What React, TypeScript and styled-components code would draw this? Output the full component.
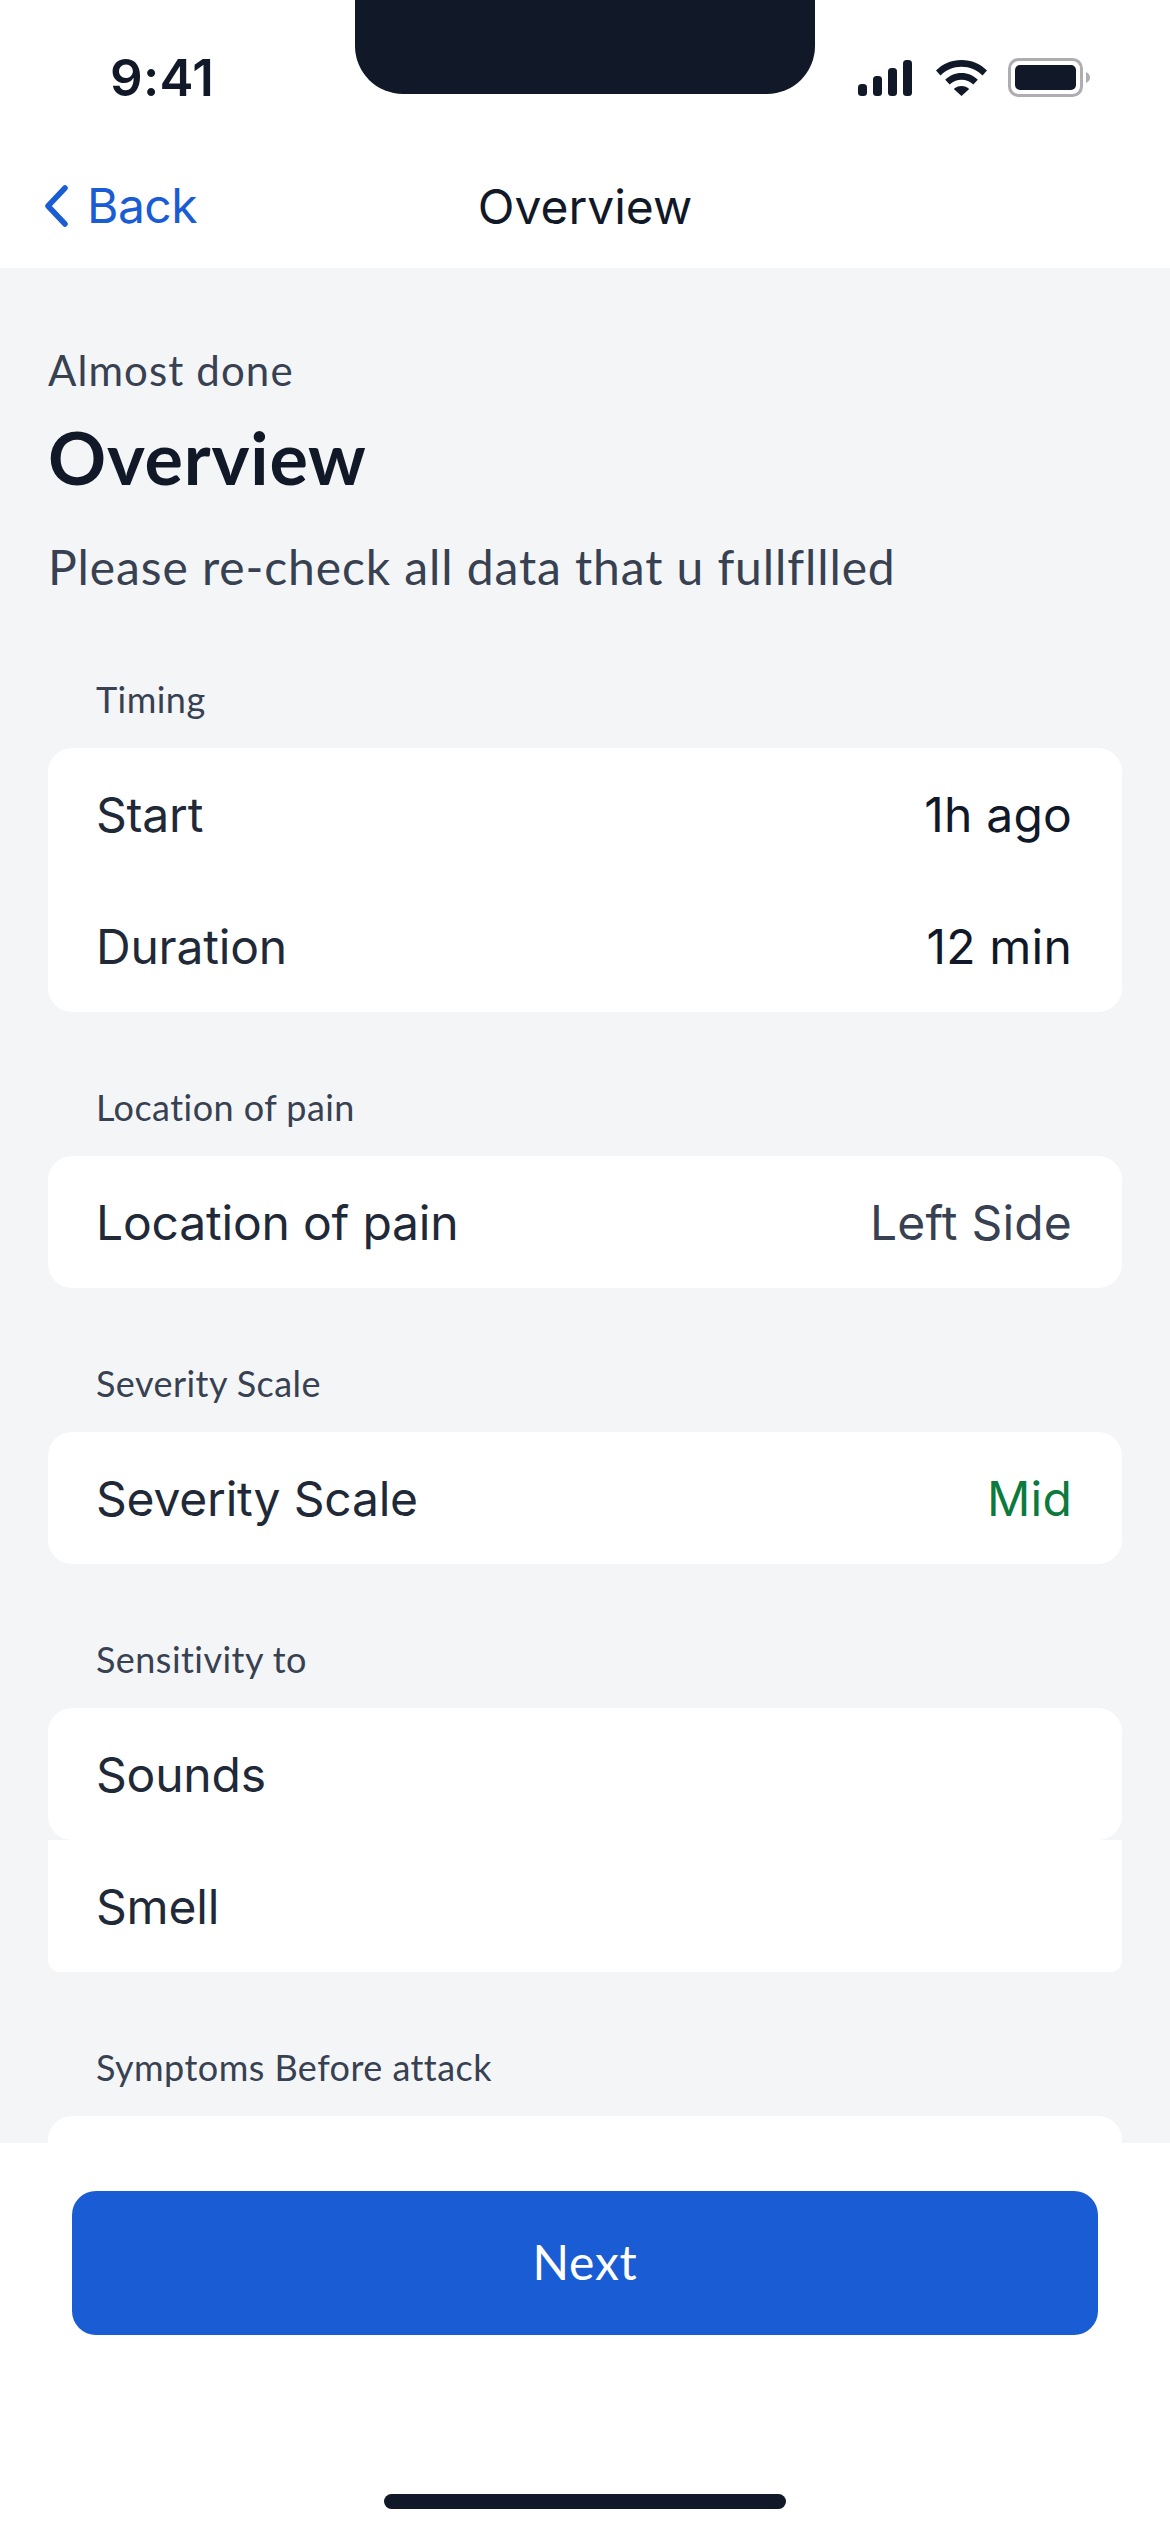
import React from "react";
import styled, { createGlobalStyle } from "styled-components";

const COLOURS = {
  INK: "#111827",
  BODY: "#1F2937",
  MUTED: "#374151",
  GREY: "#F4F5F7",
  BLUE: "#195CD4",
  GREEN: "#0B7A3E",
};

const GlobalStyle = createGlobalStyle`
  html, body {
    margin: 0;
    padding: 0;
    background: white;
  }
  * {
    box-sizing: border-box;
  }
`;

const Screen = styled.div`
  width: 1170px;
  height: 2533px;
  background: white;
  display: flex;
  flex-direction: column;
  position: relative;
  overflow: hidden;
  font-family: Inter, "Liberation Sans", sans-serif;
`;

const StatusBar = styled.div`
  height: 136px;
  flex: none;
  display: flex;
  justify-content: space-between;
  align-items: flex-start;
  padding: 52px 80px 0 110px;
`;

const Time = styled.div`
  font-size: 51px;
  line-height: 52px;
  font-weight: 600;
  letter-spacing: 0.3px;
  color: ${COLOURS.INK};
`;

const Notch = styled.div`
  position: absolute;
  top: 0;
  left: 355px;
  width: 460px;
  height: 94px;
  background: ${COLOURS.INK};
  border-radius: 0 0 48px 48px;
`;

const StatusIcons = styled.div`
  display: flex;
  align-items: center;
  gap: 21px;
  margin-top: 6px;
`;

const NavBar = styled.div`
  height: 132px;
  flex: none;
  display: flex;
  align-items: center;
  justify-content: center;
  position: relative;
  padding-bottom: 8px;
`;

const BackLink = styled.div`
  position: absolute;
  left: 44px;
  top: 44px;
  display: flex;
  align-items: center;
  gap: 19px;
  font-size: 48px;
  line-height: 52px;
  letter-spacing: -0.5px;
  color: ${COLOURS.BLUE};
`;

const NavTitle = styled.div`
  font-size: 48px;
  line-height: 52px;
  margin-top: 18px;
  color: ${COLOURS.INK};
`;

const Main = styled.div`
  height: 1875px;
  flex: none;
  background: ${COLOURS.GREY};
  padding: 74px 48px 0;
  overflow: hidden;
`;

const Eyebrow = styled.div`
  font-family: Lato, sans-serif;
  font-size: 42px;
  line-height: 56px;
  letter-spacing: 1.1px;
  color: ${COLOURS.MUTED};
`;

const Heading = styled.h1`
  margin: 15px 0 0;
  font-family: Lato, sans-serif;
  font-size: 72px;
  line-height: 88px;
  font-weight: 700;
  letter-spacing: 0.8px;
  color: ${COLOURS.INK};
`;

const Subtitle = styled.div`
  margin-top: 34px;
  font-family: Lato, sans-serif;
  font-size: 48px;
  line-height: 64px;
  letter-spacing: 0.9px;
  color: ${COLOURS.MUTED};
`;

const Section = styled.section`
  margin-top: 68px;
  &:first-of-type {
    margin-top: 73px;
  }
`;

const SectionLabel = styled.div`
  padding-left: 48px;
  font-family: Lato, sans-serif;
  font-size: 36px;
  line-height: 54px;
  letter-spacing: 0.45px;
  color: ${COLOURS.MUTED};
  margin-bottom: 22px;
`;

const Card = styled.div<{ $flatTop?: boolean }>`
  background: white;
  border-radius: ${(p) => (p.$flatTop ? "0 0 12px 12px" : "24px")};
`;

const Row = styled.div`
  height: 132px;
  display: flex;
  align-items: center;
  justify-content: space-between;
  padding: 0 50px 0 48px;
  font-size: 48px;
  letter-spacing: -0.2px;
  color: ${COLOURS.BODY};
`;

const Value = styled.span<{ $tone?: string }>`
  letter-spacing: 0.2px;
  color: ${(p) => p.$tone || COLOURS.INK};
`;

const Footer = styled.div`
  flex: 1;
  background: white;
  padding: 48px 72px 0;
  display: flex;
  flex-direction: column;
`;

const NextButton = styled.button`
  height: 144px;
  width: 100%;
  border: 0;
  border-radius: 24px;
  padding: 0 0 4px;
  background: ${COLOURS.BLUE};
  color: white;
  font-family: Lato, sans-serif;
  font-size: 48px;
  letter-spacing: 0.8px;
`;

const HomeBar = styled.div`
  position: absolute;
  left: 384px;
  bottom: 24px;
  width: 402px;
  height: 15px;
  border-radius: 8px;
  background: ${COLOURS.INK};
`;

const SignalIcon = () => (
  <svg width="57" height="36" viewBox="0 0 57 36" fill={COLOURS.INK}>
    <rect x="0" y="24" width="9" height="12" rx="3.5" />
    <rect x="15" y="16" width="9" height="20" rx="3.5" />
    <rect x="30" y="8" width="9" height="28" rx="3.5" />
    <rect x="45" y="0" width="9" height="36" rx="3.5" />
  </svg>
);

const WifiIcon = () => (
  <svg width="51" height="36" viewBox="0 0 51 36" fill={COLOURS.INK}>
    <path d="M25.5 0C35.5 0 44.5 4 51 10.5L46.5 15.5C41 10 33.5 6.8 25.5 6.8S10 10 4.5 15.5L0 10.5C6.5 4 15.5 0 25.5 0Z" />
    <path d="M25.5 13C32 13 37.5 15.5 41.8 19.8L37.3 24.6C34.2 21.6 30 19.8 25.5 19.8S16.8 21.6 13.7 24.6L9.2 19.8C13.5 15.5 19 13 25.5 13Z" />
    <path d="M25.5 26C28.5 26 31.2 27.2 33.2 29L25.5 36L17.8 29C19.8 27.2 22.5 26 25.5 26Z" />
  </svg>
);

const BatteryIcon = () => (
  <svg width="82" height="39" viewBox="0 0 82 39" fill="none">
    <rect x="1.5" y="1.5" width="72" height="36" rx="9" stroke="#AEAEB2" strokeWidth="3" />
    <rect x="7" y="7" width="61" height="25" rx="5" fill={COLOURS.INK} />
    <path d="M78 14C80.5 15 82 17 82 19.5C82 22 80.5 24 78 25Z" fill="#AEAEB2" />
  </svg>
);

const ChevronIcon = () => (
  <svg width="24" height="42" viewBox="0 0 24 42" fill="none">
    <path d="M21 3L4 21L21 39" stroke={COLOURS.BLUE} strokeWidth="5.5" strokeLinecap="round" strokeLinejoin="round" />
  </svg>
);

const App: React.FC = () => {
  return (
    <Screen>
      <GlobalStyle />
      <StatusBar>
        <Time>9:41</Time>
        <StatusIcons>
          <SignalIcon />
          <WifiIcon />
          <BatteryIcon />
        </StatusIcons>
      </StatusBar>
      <Notch />
      <NavBar>
        <BackLink>
          <ChevronIcon />
          Back
        </BackLink>
        <NavTitle>Overview</NavTitle>
      </NavBar>
      <Main>
        <Eyebrow>Almost done</Eyebrow>
        <Heading>Overview</Heading>
        <Subtitle>Please re-check all data that u fullfllled</Subtitle>
        <Section>
          <SectionLabel>Timing</SectionLabel>
          <Card>
            <Row>
              Start <Value>1h ago</Value>
            </Row>
            <Row>
              Duration <Value>12 min</Value>
            </Row>
          </Card>
        </Section>
        <Section>
          <SectionLabel>Location of pain</SectionLabel>
          <Card>
            <Row>
              Location of pain <Value $tone={COLOURS.MUTED}>Left Side</Value>
            </Row>
          </Card>
        </Section>
        <Section>
          <SectionLabel>Severity Scale</SectionLabel>
          <Card>
            <Row>
              Severity Scale <Value $tone={COLOURS.GREEN}>Mid</Value>
            </Row>
          </Card>
        </Section>
        <Section>
          <SectionLabel>Sensitivity to</SectionLabel>
          <Card>
            <Row>Sounds</Row>
          </Card>
          <Card $flatTop>
            <Row>Smell</Row>
          </Card>
        </Section>
        <Section>
          <SectionLabel>Symptoms Before attack</SectionLabel>
          <Card>
            <Row />
          </Card>
        </Section>
      </Main>
      <Footer>
        <NextButton>Next</NextButton>
      </Footer>
      <HomeBar />
    </Screen>
  );
};

export default App;
